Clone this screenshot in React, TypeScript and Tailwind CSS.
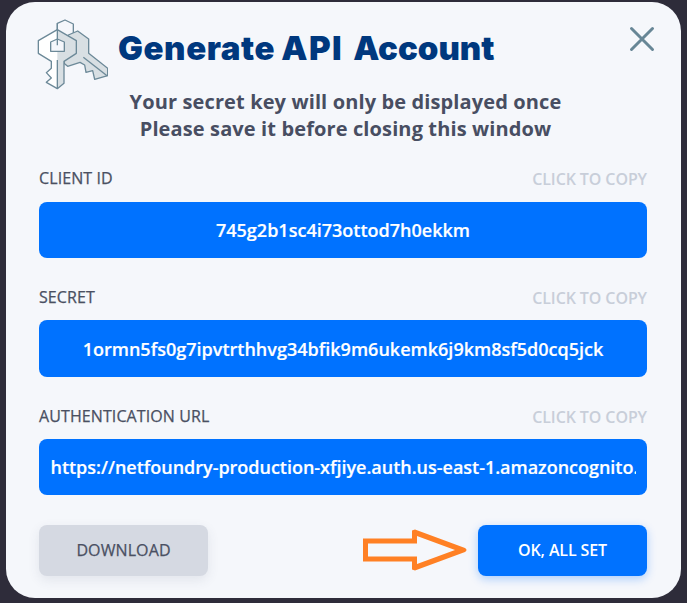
interface FieldProps {
  label: string;
  value: string;
  labelClass?: string;
  valueClass?: string;
}

function Field({ label, value, labelClass = "pt-[0.4px]", valueClass = "justify-center tracking-[0.01px]" }: FieldProps) {
  return (
    <div className="h-[118.4px]">
      <div className={`flex h-[34px] items-start justify-between text-base leading-5 ${labelClass}`}>
        <span className="tracking-[0.1px] text-[#4a5062] [-webkit-text-stroke:0.25px_#4a5062]">{label}</span>
        <button className="mt-px font-semibold leading-5 tracking-[-0.1px] text-[#c8ced9]">CLICK TO COPY</button>
      </div>
      <div className="h-[56.4px] rounded-lg bg-[#0072ff] px-[11.5px]">
        <div className={`flex h-full items-center overflow-hidden whitespace-nowrap text-[18px] font-semibold text-white [-webkit-text-stroke:0.2px_white] ${valueClass}`}>
          {value}
        </div>
      </div>
    </div>
  );
}

function KeysIcon() {
  return (
    <svg className="h-[72px] w-[72px] shrink-0" viewBox="108 54 216 216" fill="none" stroke="#6c8998" strokeWidth="4" strokeLinejoin="round">
      <path d="M172 100V70l23-10 25 12v30" />
      <path d="M205 105l28-12 33 24v43l57 45v22l-39 11-6-26-20 5-4-22-14-8-37 12-11-9z" fill="#d8dfe3" />
      <path d="M250 172l72 56" />
      <path d="M172 89l57 33v38l-37 24v66l-20 16-33-19 15-13-15-16 15-13v-21l-39-24v-38z" fill="white" stroke="none" />
      <path d="M172 89l57 33v38l-37 24v66l-20 16z" fill="#d8dfe3" stroke="none" />
      <path d="M152 154v-28l20-9 21 9v28z" fill="#f5f7fb" />
      <path d="M172 89l57 33v38l-37 24v66l-20 16-33-19 15-13-15-16 15-13v-21l-39-24v-38z" />
      <path d="M172 70v66M172 180v86" />
    </svg>
  );
}

export default function App() {
  return (
    <main className="h-[603px] w-[687px] bg-[#2e2c3a] pl-[6px] pt-[2px] font-['Open_Sans','Noto_Sans',sans-serif]">
      <section className="h-[596px] w-[675px] overflow-hidden rounded-[29px] bg-[#f5f7fb] pl-[33px] pr-[34px]">
        <header className="flex h-[86px] items-start pt-4">
          <div className="-ml-[3px]"><KeysIcon /></div>
          <h1 className="ml-[10px] mt-[6px] flex w-[400px] whitespace-nowrap font-['Inter',sans-serif] text-[33px] font-black leading-[48px] text-[#00387e]">
            <span className="tracking-[0.6px]">Generate</span>{" "}
            <span className="ml-[6px] tracking-[1.5px]">API</span>{" "}
            <span className="ml-[10px] tracking-[0px]">Account</span>
          </h1>
          <button aria-label="Close" className="ml-auto mr-[-7.500px] mt-[7.500px]">
            <svg width="26" height="26" viewBox="0 0 26 26" fill="none" stroke="#678696" strokeWidth="3" strokeLinecap="round"><path d="M2.500 2.500l21 21M23.500 2.500l-21 21" /></svg>
          </button>
        </header>
        <p className="-ml-[2px] h-[80px] w-[617px] text-center text-[20px] font-bold leading-[27px] tracking-[0.12px] text-[#484e62]">
          Your secret key will only be displayed once<br />Please save it before closing this window
        </p>
        <Field label="CLIENT ID" value="745g2b1sc4i73ottod7h0ekkm" />
        <Field label="SECRET" value="1ormn5fs0g7ipvtrthhvg34bfik9m6ukemk6j9km8sf5d0cq5jck" valueClass="justify-center pt-[2px] tracking-[0.01px]" />
        <Field label="AUTHENTICATION URL" value="https://netfoundry-production-xfjiye.auth.us-east-1.amazoncognito.com" labelClass="pt-[1.2px]" valueClass="justify-start pt-[1.2px] tracking-[-0.02px]" />
        <footer className="flex items-center pt-[1.8px]">
          <button className="h-[51px] w-[169px] rounded-lg bg-[#d5d9e2] text-base tracking-[0.1px] text-[#4a5062] shadow-[0_4px_12px_rgba(60,70,100,0.1)] [-webkit-text-stroke:0.25px_#4a5062]">DOWNLOAD</button>
          <svg className="ml-auto mr-[11px]" width="105" height="42" viewBox="362 529.5 105 42" fill="#ff8024" fillRule="evenodd">
            <path d="M363 539H412V531L415 530L465 548.500Q468 550.500 465 552.500L415 571L412 570V562H363ZM368 544V557H417V564.500L455 550.500L417 536.500V544Z" />
          </svg>
          <button className="h-[51px] w-[169px] rounded-lg bg-[#0072ff] text-base font-semibold tracking-[-0.12px] text-white shadow-[0_3px_10px_rgba(0,114,255,0.3)]">OK, ALL SET</button>
        </footer>
      </section>
    </main>
  );
}
